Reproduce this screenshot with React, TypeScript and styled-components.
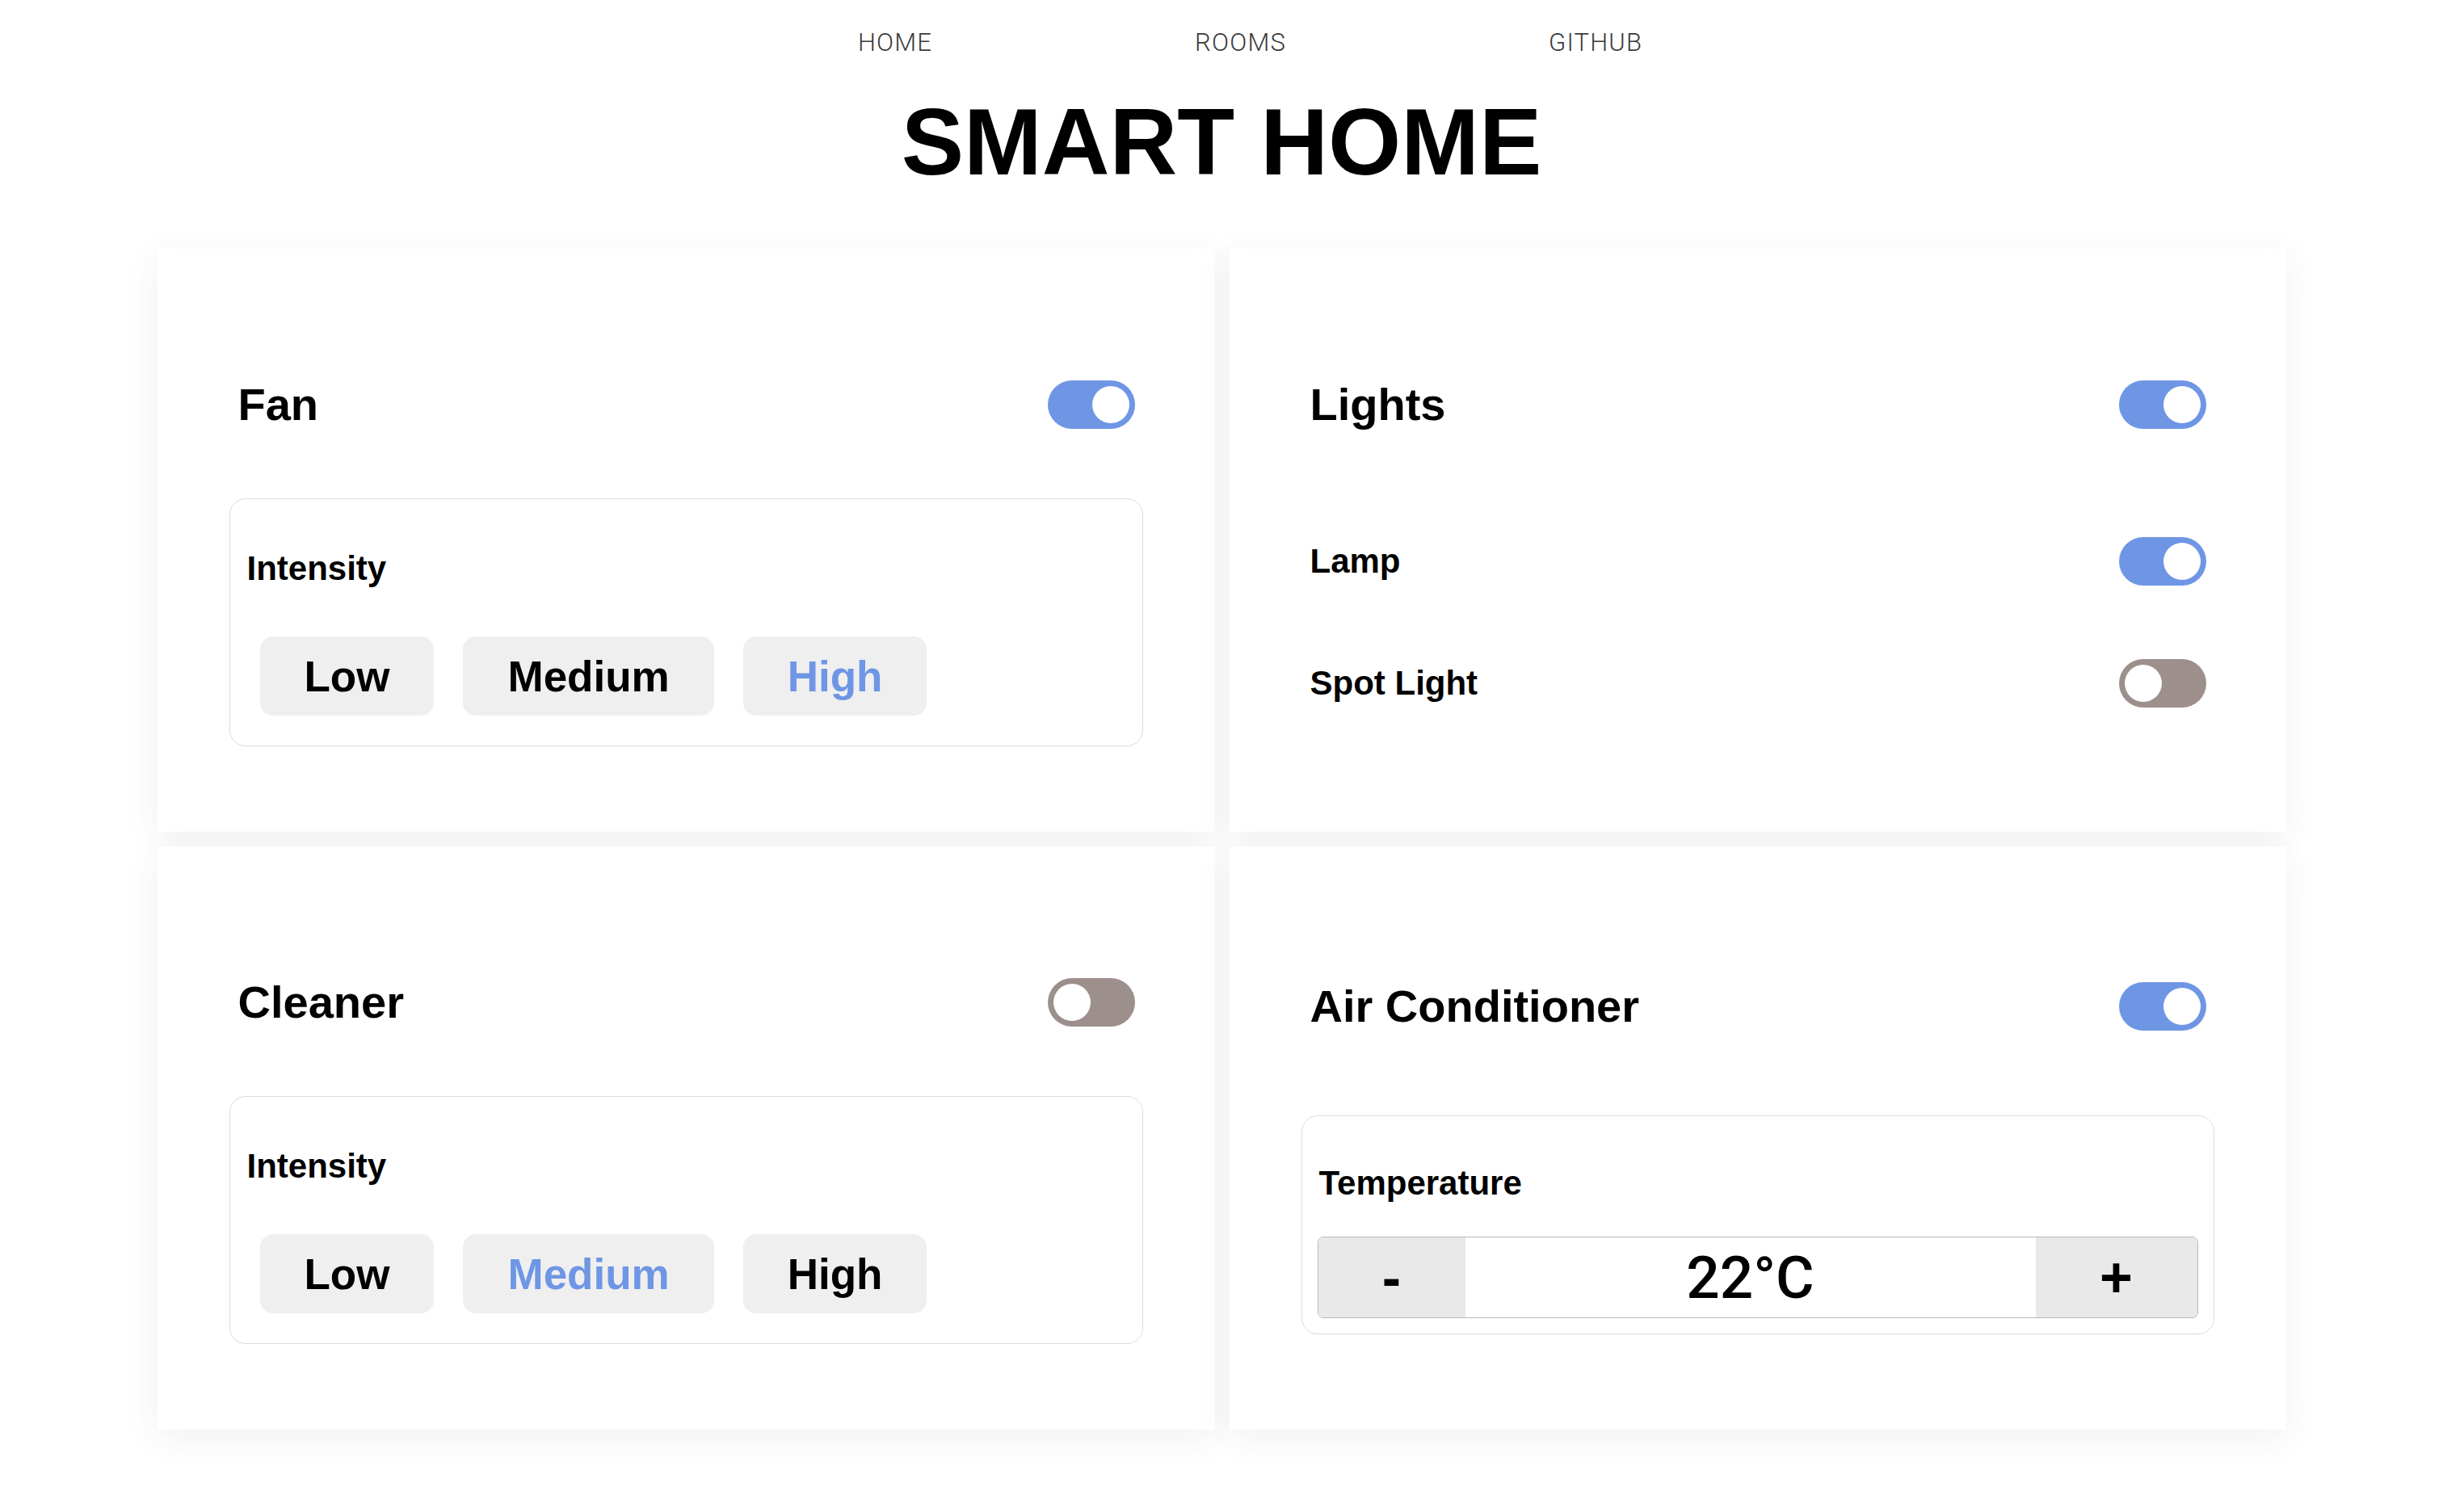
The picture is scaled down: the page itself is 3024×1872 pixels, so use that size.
import React from "react";
import styled, { createGlobalStyle } from "styled-components";

const GlobalStyle = createGlobalStyle`
  html, body {
    margin: 0;
    padding: 0;
    background: #ffffff;
  }
  body {
    font-family: "Liberation Sans", Arial, sans-serif;
    color: #000;
  }
`;

const Page = styled.div`
  display: flex;
  flex-direction: column;
  align-items: center;
  padding-top: 35px;
  padding-bottom: 80px;
`;

const Nav = styled.ul`
  list-style: none;
  margin: 0;
  padding: 0 0 0 71px;
  display: flex;
  justify-content: center;
  gap: 325px;
`;

const NavItem = styled.li`
  font-family: Roboto, sans-serif;
  font-weight: 300;
  font-size: 31px;
  letter-spacing: 1.2px;
  line-height: 36px;
  color: #3a3a3a;
`;

const Title = styled.h1`
  margin: 40px 0 0;
  font-weight: 700;
  font-size: 116px;
  line-height: 131px;
  text-align: center;
`;

const Grid = styled.div`
  width: 2635px;
  margin-top: 66px;
  display: grid;
  grid-template-columns: 1309px 1308px;
  column-gap: 18px;
  row-gap: 18px;
`;

const Card = styled.section<{ $top: number }>`
  height: 722px;
  box-sizing: border-box;
  padding: ${(p) => p.$top}px 89px 0;
  background: #fff;
  box-shadow: 0 10px 40px rgba(40, 50, 70, 0.07);
  display: flex;
  flex-direction: column;
`;

const Header = styled.div`
  display: flex;
  align-items: center;
  justify-content: space-between;
  padding: 0 10px 0 11px;
  height: 70px;
`;

const CardTitle = styled.h2`
  margin: 0;
  font-weight: 700;
  font-size: 56px;
  line-height: 70px;
`;

const Track = styled.button<{ $on: boolean }>`
  width: 108px;
  height: 60px;
  border: none;
  border-radius: 30px;
  padding: 0 7px;
  display: flex;
  align-items: center;
  justify-content: ${(p) => (p.$on ? "flex-end" : "flex-start")};
  background: ${(p) => (p.$on ? "#6f96e5" : "#9d8f8c")};
  cursor: pointer;
  flex-shrink: 0;
`;

const Knob = styled.span`
  width: 46px;
  height: 46px;
  border-radius: 50%;
  background: #fff;
`;

const Panel = styled.div<{ $gap: number }>`
  margin-top: ${(p) => p.$gap}px;
  border: 1px solid #dcdcdc;
  border-radius: 20px;
  padding: 0 19px 19px;
`;

const PanelLabel = styled.h3<{ $top: number }>`
  margin: ${(p) => p.$top}px 0 0 2px;
  font-weight: 700;
  font-size: 42px;
  line-height: 50px;
`;

const Options = styled.div`
  display: flex;
  margin-top: 41px;
`;

const Option = styled.button<{ $active: boolean }>`
  margin: 18px;
  height: 98px;
  padding: 0 55px;
  border: none;
  border-radius: 16px;
  background: #efefef;
  font-family: "Liberation Sans", Arial, sans-serif;
  font-weight: 700;
  font-size: 53px;
  color: ${(p) => (p.$active ? "#6f96e5" : "#000")};
  cursor: pointer;
`;

const Row = styled.div<{ $gap: number }>`
  display: flex;
  align-items: center;
  justify-content: space-between;
  padding: 0 10px 0 11px;
  margin-top: ${(p) => p.$gap}px;
`;

const RowLabel = styled.span`
  font-weight: 700;
  font-size: 42px;
  line-height: 50px;
`;

const Stepper = styled.div`
  margin-top: 41px;
  display: flex;
  height: 101px;
  box-sizing: border-box;
  border: 1px solid #b9b9b9;
  border-radius: 7px;
  overflow: hidden;
`;

const StepButton = styled.button<{ $w: number }>`
  width: ${(p) => p.$w}px;
  border: none;
  background: #e9e9e9;
  font-family: "Liberation Sans", Arial, sans-serif;
  font-weight: 700;
  font-size: 70px;
  line-height: 1;
  color: #000;
  padding: 0;
  display: flex;
  align-items: center;
  justify-content: center;
  cursor: pointer;
`;

const Value = styled.div`
  flex: 1;
  display: flex;
  align-items: center;
  justify-content: center;
  font-family: Roboto, sans-serif;
  font-weight: 500;
  font-size: 73px;
  background: #fff;
`;

const Toggle: React.FC<{ on: boolean }> = ({ on }) => (
  <Track $on={on} aria-pressed={on}>
    <Knob />
  </Track>
);

const levels = ["Low", "Medium", "High"];

const IntensityCard: React.FC<{ name: string; on: boolean; level: string }> = ({
  name,
  on,
  level,
}) => (
  <Card $top={158}>
    <Header>
      <CardTitle>{name}</CardTitle>
      <Toggle on={on} />
    </Header>
    <Panel $gap={81}>
      <PanelLabel $top={61}>Intensity</PanelLabel>
      <Options>
        {levels.map((l) => (
          <Option key={l} $active={l === level}>
            {l}
          </Option>
        ))}
      </Options>
    </Panel>
  </Card>
);

const App: React.FC = () => (
  <>
    <GlobalStyle />
    <Page>
      <Nav>
        <NavItem>HOME</NavItem>
        <NavItem>ROOMS</NavItem>
        <NavItem>GITHUB</NavItem>
      </Nav>
      <Title>SMART HOME</Title>
      <Grid>
        <IntensityCard name="Fan" on level="High" />
        <Card $top={158}>
          <Header>
            <CardTitle>Lights</CardTitle>
            <Toggle on />
          </Header>
          <Row $gap={129}>
            <RowLabel>Lamp</RowLabel>
            <Toggle on />
          </Row>
          <Row $gap={91}>
            <RowLabel>Spot Light</RowLabel>
            <Toggle on={false} />
          </Row>
        </Card>
        <IntensityCard name="Cleaner" on={false} level="Medium" />
        <Card $top={163}>
          <Header>
            <CardTitle>Air Conditioner</CardTitle>
            <Toggle on />
          </Header>
          <Panel $gap={100}>
            <PanelLabel $top={58}>Temperature</PanelLabel>
            <Stepper>
              <StepButton $w={182}>-</StepButton>
              <Value>22°C</Value>
              <StepButton $w={200}>+</StepButton>
            </Stepper>
          </Panel>
        </Card>
      </Grid>
    </Page>
  </>
);

export default App;
